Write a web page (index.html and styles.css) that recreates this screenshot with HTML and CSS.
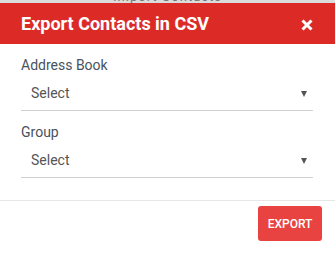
FILE: index.html
```html
<!DOCTYPE html>
<html>
<head>
<meta charset="utf-8">
<link rel="stylesheet" href="styles.css">
</head>
<body>
<div class="backdrop-strip"><span class="behind-text">Import Contacts</span></div>
<div class="modal">
  <div class="modal-header">
    <h1 class="modal-title">Export Contacts in CSV</h1>
    <button class="close-btn" aria-label="Close">
      <svg width="12" height="12" viewBox="0 0 12 12"><path d="M1.5 1.5 L10.5 10.5 M10.5 1.5 L1.5 10.5" stroke="#fff" stroke-width="3" stroke-linecap="butt"/></svg>
    </button>
  </div>
  <div class="modal-body">
    <div class="field">
      <label class="field-label">Address Book</label>
      <div class="select"><span class="select-text">Select</span><span class="caret"></span></div>
    </div>
    <div class="field">
      <label class="field-label">Group</label>
      <div class="select"><span class="select-text">Select</span><span class="caret"></span></div>
    </div>
  </div>
  <div class="modal-footer">
    <button class="export-btn">EXPORT</button>
  </div>
</div>
</body>
</html>
```
FILE: styles.css
```css
* { box-sizing: border-box; }
html, body { margin: 0; padding: 0; background: #fff; }
body { font-family: Roboto, "Liberation Sans", sans-serif; width: 335px; height: 255px; overflow: hidden; }

.backdrop-strip {
  height: 3px;
  background: #dcdcdc;
  overflow: hidden;
  display: flex;
  justify-content: center;
}
.behind-text {
  font-size: 13px;
  line-height: 13px;
  margin-top: -10px;
  color: #777;
  letter-spacing: 1px;
}

.modal-header {
  height: 41px;
  background: #dc2b27;
  display: flex;
  align-items: center;
  justify-content: space-between;
  padding: 0 22px 0 21px;
}
.modal-title {
  margin: 0;
  color: #fff;
  font-size: 18px;
  font-weight: 700;
  line-height: 22px;
}
.close-btn {
  border: 0;
  background: none;
  padding: 0;
  margin: 2px 0 0 0;
  display: flex;
  cursor: pointer;
}

.modal-body {
  padding: 0 22px 22px 21px;
  border-bottom: 1px solid #e6e6e6;
}
.field { padding-top: 11px; }
.field-label {
  display: block;
  font-size: 14px;
  line-height: 20px;
  color: #48525e;
}
.select {
  height: 36px;
  border-bottom: 1px solid #cfcfcf;
  display: flex;
  align-items: center;
  justify-content: space-between;
  padding: 0 6px 0 10px;
}
.select-text {
  font-size: 14px;
  line-height: 20px;
  color: #555;
}
.caret {
  width: 0;
  height: 0;
  border-left: 3px solid transparent;
  border-right: 3px solid transparent;
  border-top: 6px solid #555;
  margin-top: 2px;
}

.modal-footer {
  display: flex;
  justify-content: flex-end;
  padding: 5px 13px 0 0;
}
.export-btn {
  width: 64px;
  height: 35px;
  border: 0;
  border-radius: 3px;
  background: #e84340;
  color: #fff;
  font-family: Roboto, "Liberation Sans", sans-serif;
  font-size: 12px;
  font-weight: 500;
  padding: 0;
}
```
